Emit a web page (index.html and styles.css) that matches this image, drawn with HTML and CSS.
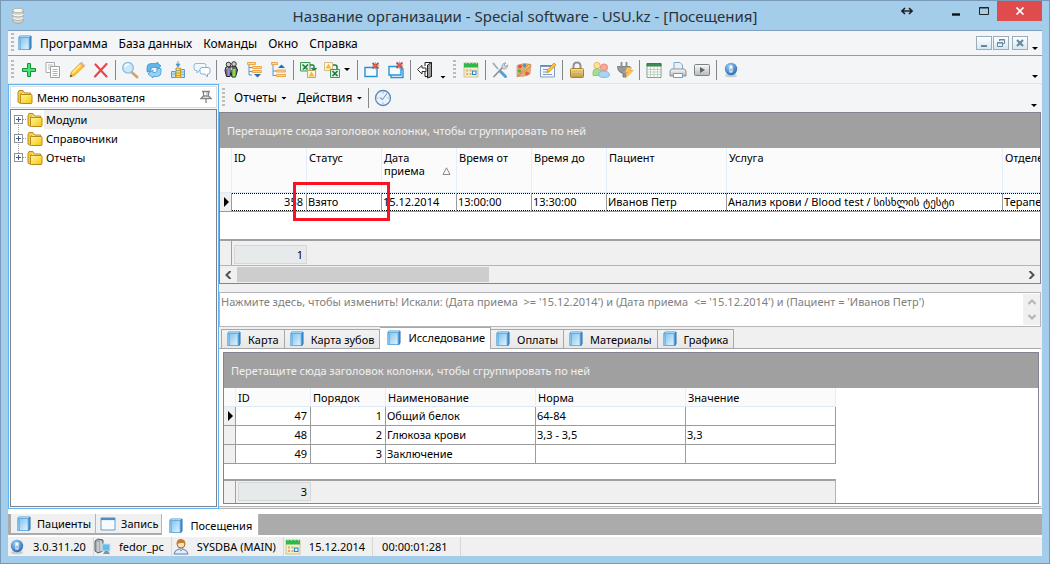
FILE: index.html
```html
<!DOCTYPE html>
<html lang="ru">
<head>
<meta charset="utf-8">
<title>Название организации - Special software - USU.kz - [Посещения]</title>
<link rel="stylesheet" href="styles.css">
</head>
<body>
<svg class="sprite" aria-hidden="true">
  <defs>
    <linearGradient id="g-blue" x1="0" y1="0" x2="1" y2="1"><stop offset="0" stop-color="#7dbfec"/><stop offset="1" stop-color="#e3f4fd"/></linearGradient>
    <linearGradient id="g-folder" x1="0" y1="0" x2="1" y2="1"><stop offset="0" stop-color="#fff6a0"/><stop offset="1" stop-color="#f7c500"/></linearGradient>
    <radialGradient id="g-info" cx=".4" cy=".3" r=".8"><stop offset="0" stop-color="#9bd0fa"/><stop offset="1" stop-color="#1c5fae"/></radialGradient>
    <linearGradient id="g-grey" x1="0" y1="0" x2="0" y2="1"><stop offset="0" stop-color="#fafafa"/><stop offset="1" stop-color="#b5b9bd"/></linearGradient>
    <linearGradient id="g-gold" x1="0" y1="0" x2="0" y2="1"><stop offset="0" stop-color="#f8e6a2"/><stop offset="1" stop-color="#c39a3c"/></linearGradient>
  </defs>
  <symbol id="book" viewBox="0 0 16 18"><path d="M1.500 3 3 1.500h11V14l-1.500 2h-11z" fill="#4f9ad6"/><path d="M14 2v12l-1.500 2" fill="none" stroke="#2a6cac"/><path d="M2 3.500h10v12H2z" fill="url(#g-blue)" stroke="#62acdf" stroke-width=".8"/><path d="M3.500 3.500v12" stroke="#74b7e6"/><path d="M3 2.500h10" stroke="#9ad2f5"/></symbol>
  <symbol id="db" viewBox="0 0 16 18"><path d="M3 3v11c0 3 10 3 10 0V3" fill="#d9d9d4" stroke="#a5a5a0"/><ellipse cx="8" cy="3.500" rx="5" ry="2.200" fill="#f7f7f4" stroke="#b2b2ad"/><path d="M3 7c0 2.500 10 2.500 10 0M3 10.500c0 2.500 10 2.500 10 0" fill="none" stroke="#fff" stroke-width="1.300"/><path d="M3 8c0 2.500 10 2.500 10 0M3 11.500c0 2.500 10 2.500 10 0" fill="none" stroke="#9b9b98" stroke-width=".7"/></symbol>
  <symbol id="add" viewBox="0 0 18 18"><path d="M7.500 2.500h3v5h5v3h-5v5h-3v-5h-5v-3h5z" fill="#4fe07a" stroke="#0a9a35"/></symbol>
  <symbol id="copy" viewBox="0 0 18 18"><path d="M2 1.500h8.500v10H2z" fill="#fff" stroke="#a5aaa8"/><path d="M4 4h5M4 6h2M4 8h2" stroke="#b9bdbb"/><path d="M6.500 5.500H15.500v11h-9z" fill="#fff" stroke="#9da3a0"/><path d="M8.500 8.500h5M8.500 10.500h5M8.500 12.500h5M8.500 14.500h5" stroke="#b0b5b2"/></symbol>
  <symbol id="pencil" viewBox="0 0 18 18"><path d="M2 16l1.500-5L12.500 2l3.500 3.500-9.500 9z" fill="#ffc62e" stroke="#d99a22" stroke-width=".8"/><path d="M4.500 12 13 3.500" stroke="#fff0a0" stroke-width="1.500"/><path d="M12 2.500 13.500 1.200 16.800 4.500 15.500 6z" fill="#f2b79e" stroke="#c88a70" stroke-width=".6"/><path d="M2 16l.8-2.500 1.700 1.700z" fill="#444"/></symbol>
  <symbol id="del" viewBox="0 0 18 18"><path d="M3.500 3.500l11 12M14.500 3 3 15.500" stroke="#e8474c" stroke-width="2.200" stroke-linecap="round"/></symbol>
  <symbol id="find" viewBox="0 0 18 18"><path d="M10.500 11l5.500 5" stroke="#d9a06b" stroke-width="2.800" stroke-linecap="round"/><circle cx="7" cy="6.800" r="5.300" fill="#c9e9fc" stroke="#8dbfe2" stroke-width="1.400"/><path d="M4 6c.5-2 2-3 4-2.500" fill="none" stroke="#fff" stroke-width="1.500"/></symbol>
  <symbol id="refresh" viewBox="0 0 18 18"><path d="M2 11V6.500q0-4 4-4h6V1L16 5l-4 4V6.500H8Q6 6.500 6 8.500V11z" fill="#62b4ec" stroke="#3a8fce" stroke-width=".7"/><path d="M16 7.500v4q0 4-4 4H8V17l-5-4 5-4v2.500h2q2 0 2-2v-2z" fill="#94d2f6" stroke="#3a8fce" stroke-width=".7"/></symbol>
  <symbol id="chart" viewBox="0 0 18 18"><path d="M2.500 10.500h4v6h-4zM11.500 8.500h4v8h-4z" fill="#bfe0f4" stroke="#5e9fcf"/><path d="M7 7h4.500v9.500H7z" fill="#ffd84a" stroke="#c99a1b"/><path d="M7 9.500h4M7 12h4M7 14.500h4M3 13h3M12 11h3M12 13.500h3" stroke="#6d9bbb" stroke-width=".7"/><path d="M9 0v4M7 3h4L9 6z" fill="#4a97d0" stroke="#4a97d0" stroke-width=".8"/></symbol>
  <symbol id="chat" viewBox="0 0 18 18"><path d="M3 2.500h8q2 0 2 2v3q0 2-2 2H6l-2 2.500v-2.500H3q-2 0-2-2v-3q0-2 2-2z" fill="#f1f8fd" stroke="#8db9da"/><path d="M9 6.500h6q2 0 2 2v2.500q0 2-2 2h-.500v3L12 13H9q-2 0-2-2V8.500q0-2 2-2z" fill="#fff" stroke="#7fb0d6"/></symbol>
  <symbol id="people" viewBox="0 0 18 18"><path d="M4 6 3 9.500 4.500 15.500h3.500l1-4 1 4.500h3.500L15.500 9 14 5.500z" fill="#6b6b6b" stroke="#222"/><circle cx="6.500" cy="3.500" r="2.300" fill="#cfcfcf" stroke="#333"/><circle cx="12" cy="3" r="2.300" fill="#cfcfcf" stroke="#333"/><path d="M6.500 7.500v7.500" stroke="#9a86ee" stroke-width="2.400"/><path d="M12 8v7.500" stroke="#7ee33c" stroke-width="3"/><path d="M4.500 8l1-1.500M9 9l.5-2.500" stroke="#eee"/></symbol>
  <symbol id="treedown" viewBox="0 0 18 18"><path d="M3 4v10M3 6.500h3M3 10.500h3M3 14h3" fill="none" stroke="#5a9bd0"/><path d="M1.500 1.500h8v2h-8zM6.500 5.500h9v2h-9zM6.500 9.500h9v2h-9z" fill="#ffd79a" stroke="#e8a040" stroke-width=".9"/><path d="M8 13h7l-3.500 3.500z" fill="#1c6fb8"/></symbol>
  <symbol id="treeup" viewBox="0 0 18 18"><path d="M3 4v11M3 10h3M3 14.500h3" fill="none" stroke="#5a9bd0"/><path d="M1.500 1.500h6v2h-6zM6.500 9h9v2h-9zM6.500 13.500h9v2h-9z" fill="#ffd79a" stroke="#e8a040" stroke-width=".9"/><path d="M8 7h7l-3.500-3.500z" fill="#1c6fb8"/></symbol>
  <symbol id="xlsout" viewBox="0 0 18 18"><path d="M1.500 1.500h9.500v8.500H1.500z" fill="#dff0e0" stroke="#3f9a55"/><path d="M3.500 3.500l5 5M9 3.500l-5 5" stroke="#17803a" stroke-width="1.600"/><path d="M11 4h3q1 0 1 2v2M12.500 7l2.500 2.500L17.500 7" fill="none" stroke="#17803a" stroke-width="1.500"/><path d="M8.500 9.500h8v7h-8z" fill="#fff6dc" stroke="#c3a66b"/><path d="M12.500 10.500l3 5h-6z" fill="#f5b93f"/></symbol>
  <symbol id="xlsin" viewBox="0 0 18 18"><path d="M1.500 1.500h8v8h-8z" fill="#fff6dc" stroke="#d2bd8b"/><path d="M5.500 2.500l3 5h-6z" fill="#f5b93f"/><path d="M10 4h2q2 0 2 2v2" fill="none" stroke="#17803a" stroke-width="1.500"/><path d="M7.500 8.500h9v8h-9z" fill="#dff0e0" stroke="#3f9a55"/><path d="M9.500 10l5 5M14.500 10l-5 5" stroke="#17803a" stroke-width="1.600"/></symbol>
  <symbol id="winx" viewBox="0 0 18 18"><path d="M2 6.500h12v9H2z" fill="#f7fbfe" stroke="#2a93d8" stroke-width="1.400"/><path d="M9.500 2l6 5.500M15.500 2l-6 5.500" stroke="#cc4a36" stroke-width="1.800"/><path d="M12.500 1v7.500M9 4.700h7.500" stroke="#d9715f" stroke-width=".7"/></symbol>
  <symbol id="winsx" viewBox="0 0 18 18"><path d="M4 8h12v8.500H4z" fill="#fff" stroke="#2a93d8" stroke-width="1.400"/><path d="M2 5.500h12v8.500H2z" fill="#f7fbfe" stroke="#2a93d8" stroke-width="1.400"/><path d="M9.500 1.500l6 5.500M15.500 1.500l-6 5.500" stroke="#cc4a36" stroke-width="1.800"/><path d="M12.500.5V8M9 4.200h7.500" stroke="#d9715f" stroke-width=".7"/></symbol>
  <symbol id="exit" viewBox="0 0 18 18"><path d="M9 5V1.500h6.500v14H9V11" fill="#fff" stroke="#222"/><path d="M11.500 4l4-2.500v14l-4 1.500z" fill="#9a9a9a" stroke="#222"/><path d="M1.500 8.500 6 4.500v2.500h4v3.500H6v2.500z" fill="#fff" stroke="#333"/></symbol>
  <symbol id="cal" viewBox="0 0 18 18"><rect x="2" y="2" width="14" height="14" fill="#f5ecc8" stroke="#c5b88b" stroke-width=".8"/><path d="M2 2h14v4.500H2z" fill="#31b84a"/><path d="M4 1v2M7.500 1v2M11 1v2M14.500 1v2" stroke="#b7e4be"/><path d="M4 9.500h2M7.500 9.500h2M4 13h2M7.500 13h2" stroke="#dcae7c" stroke-width="1.800"/><rect x="10.500" y="10" width="3.500" height="3.500" fill="#e8f6fd" stroke="#2386ca"/></symbol>
  <symbol id="tools" viewBox="0 0 18 18"><path d="M2 2l5 6" stroke="#9da7ae" stroke-width="1.600"/><path d="M9 10l5.500 5.500" stroke="#56a0d6" stroke-width="3" stroke-linecap="round"/><path d="M3 15.500 12 6" stroke="#8b969d" stroke-width="1.800" stroke-linecap="round"/><path d="M11.500 7.500C10 4.500 12 1.500 15 2l-2 2 1 1.500 2.500-1.500c.5 3-2.500 5-5 3.500z" fill="#d5dadd" stroke="#8b969d" stroke-width=".8"/></symbol>
  <symbol id="palette" viewBox="0 0 18 18"><path d="M2 4.500q7-3.500 14-1L15 13q-5 3-13 2.500z" fill="#e3ae7c" stroke="#cf9662" stroke-width=".7"/><circle cx="5" cy="5.500" r="1.900" fill="#ea5146"/><circle cx="9.500" cy="4.500" r="1.700" fill="#4c8ed6"/><circle cx="4.500" cy="10" r="1.700" fill="#5aad4f"/><circle cx="12" cy="12.500" r="2" fill="#eb5c45"/><path d="M2 16 14 3l2 2z" fill="#edc74b" stroke="#b8773a" stroke-width=".6"/></symbol>
  <symbol id="note" viewBox="0 0 18 18"><path d="M1.500 4.500h14v11.500h-14z" fill="#f4f8fd" stroke="#7f9fc8"/><path d="M1.500 5h14" stroke="#5584bd" stroke-width="1.600"/><path d="M4 8.500h5M4 11h6M4 13.500h9" stroke="#7e9bc0"/><path d="M7.500 11.500 9 8.500l6-6.500 2 1.800-6 6.500z" fill="#ffc42f" stroke="#b98c35" stroke-width=".7"/></symbol>
  <symbol id="lock" viewBox="0 0 18 18"><path d="M5.500 8V5q0-3.500 3.500-3.500T12.500 5v3" fill="none" stroke="#8e9398" stroke-width="2"/><rect x="2.500" y="7.500" width="13" height="9" rx="1" fill="url(#g-gold)" stroke="#a8812c"/><path d="M4 10h10M4 12.500h10M4 14.500h10" stroke="#c9a552" stroke-width=".7"/></symbol>
  <symbol id="users" viewBox="0 0 18 18"><circle cx="5" cy="4.500" r="3.200" fill="#ffe09a" stroke="#ecae57" stroke-width=".8"/><path d="M1 11q0-3.500 4-3.500t4 3.500v3.500H1z" fill="#a5dd8c" stroke="#7cc164" stroke-width=".7"/><circle cx="12" cy="6.500" r="3.600" fill="#fba79a" stroke="#e8786a" stroke-width=".8"/><path d="M6.500 14.500q0-4.500 5.500-4.500t5.500 4.500q-1 2-5.500 2t-5.500-2z" fill="#a5d6f5" stroke="#6fb0de" stroke-width=".8"/></symbol>
  <symbol id="plug" viewBox="0 0 18 18"><path d="M5.500 1v4M10.500 1v4" stroke="#8b8e90" stroke-width="1.800"/><path d="M1.500 5.500h12.500v2q-1 4-4.500 5V16H7v-3.500Q3 11.500 2 8.500z" fill="#96999c" stroke="#707376" stroke-width=".8"/><path d="M11 6.500h4.500L14 9.500h3L9.500 17l2-5.500H9z" fill="#ffc75a" stroke="#eba23c" stroke-width=".8"/></symbol>
  <symbol id="table" viewBox="0 0 18 18"><path d="M2 2.500h14v14H2z" fill="#fff" stroke="#84a086"/><path d="M2 2.500h14v2.500H2z" fill="#3c9250" stroke="#3b7a49"/><path d="M2 8.500h14M2 11h14M2 13.500h14M5.500 6v10.500M9 6v10.500M12.500 6v10.500" stroke="#b3cab4" stroke-width=".8"/></symbol>
  <symbol id="print" viewBox="0 0 18 18"><path d="M5 8V1.500h6l2.500 2.500v4" fill="#e5f2fb" stroke="#85a9c6"/><path d="M2.500 8h13l1.500 2v5H1v-5z" fill="url(#g-grey)" stroke="#8c9196"/><path d="M4.500 12.500h9v4h-9z" fill="#fff" stroke="#6b9cc4"/></symbol>
  <symbol id="play" viewBox="0 0 18 18"><rect x="1.500" y="3.500" width="15" height="11" rx="1" fill="url(#g-grey)" stroke="#7d8487"/><path d="M7 6v6l5-3z" fill="#5c6468"/></symbol>
  <symbol id="info" viewBox="0 0 18 18"><ellipse cx="9" cy="14.500" rx="6" ry="1.800" fill="#c4ccd2"/><circle cx="9" cy="8" r="6.200" fill="url(#g-info)"/><path d="M7.500 4.500h3v7h-3z" fill="#fff"/><path d="M9 7.500v3" stroke="#4a85c4"/></symbol>
  <symbol id="clock" viewBox="0 0 18 18"><circle cx="9" cy="9" r="7.500" fill="#e9f2fb" stroke="#5a86b8" stroke-width="1.300"/><path d="M9 3v1.500M9 13.500V15M3 9h1.500M13.500 9H15" stroke="#8eacce"/><path d="M6 8.500 8.500 10.500 13 4.500" fill="none" stroke="#7a9ec9" stroke-width="1.100"/></symbol>
  <symbol id="folder" viewBox="0 0 16 16"><path d="M1 3.500V13l2.500 1.500V5L7 3.500 6 1.500H2z" fill="#f4d03c" stroke="#b98a1c"/><path d="M3.500 5.500h10V4H7.500L6.500 2.500" fill="#fbe480" stroke="#b98a1c"/><rect x="3.500" y="5.500" width="11.500" height="9" rx="1" fill="url(#g-folder)" stroke="#b98a1c"/></symbol>
  <symbol id="pin" viewBox="0 0 12 14"><path d="M2 1.500h8M3.500 2v4M8.500 2v4M1 8.500h10L8.500 6h-5zM6 8.500V13" fill="none" stroke="#858585" stroke-width="1.300"/><path d="M7 2v5" stroke="#aaa"/></symbol>
  <symbol id="win" viewBox="0 0 18 18"><path d="M2 3h14v12H2z" fill="#f7fbff" stroke="#6a9ac6"/><path d="M2 4h14" stroke="#4f8cc4" stroke-width="2.200"/></symbol>
  <symbol id="pc" viewBox="0 0 18 18"><path d="M1 3l3-2 5 1v11l-5 2-3-2z" fill="#a9adb0" stroke="#5b6064"/><path d="M4 4v10M7 3v10" stroke="#e5e8ea"/><path d="M8 6h8v7H8z" fill="#5bbdf0" stroke="#d4dade" stroke-width="1.200"/><path d="M9 16h7l-2-3h-3z" fill="#8a8f93"/></symbol>
  <symbol id="user" viewBox="0 0 18 18"><path d="M2 16q.5-4 5-5h4q4.500 1 5 5z" fill="#e3edfa" stroke="#5b7fae"/><circle cx="9" cy="6" r="4" fill="#ffe0b4" stroke="#a76a2b"/><path d="M4.800 6C4 2 8 0 10.500 1.500 13.500 2 13.500 5 13 6.500 12 4 8 5 4.800 6z" fill="#c57f33"/><path d="M7.500 11 9 13l1.500-2" fill="#fff" stroke="#5b7fae" stroke-width=".8"/></symbol>
</svg>

<div class="window">
  <header class="titlebar">
    <svg class="title-icon"><use href="#db"/></svg>
    <h1 class="title">Название организации - Special software - USU.kz - [Посещения]</h1>
    <div class="title-controls">
      <button class="cap cap-move" aria-label="Переместить"><svg width="12" height="8" viewBox="0 0 12 8"><path d="M2 4h8M4 1 1 4l3 3M8 1l3 3-3 3" fill="none" stroke="#222" stroke-width="1.600"/></svg></button>
      <button class="cap cap-min" aria-label="Свернуть"><svg width="10" height="10" viewBox="0 0 10 10"><path d="M1 8.500h8" stroke="#111" stroke-width="2.400"/></svg></button>
      <button class="cap cap-max" aria-label="Развернуть"><svg width="10" height="8" viewBox="0 0 10 8"><path d="M.5.5h9v7h-9z" fill="none" stroke="#222"/><path d="M0 1h10" stroke="#222"/></svg></button>
      <button class="cap cap-close" aria-label="Закрыть"><svg width="10" height="8" viewBox="0 0 10 8"><path d="M1.500.5l7 7M8.500.5l-7 7" stroke="#fff" stroke-width="1.700"/></svg></button>
    </div>
  </header>

  <div class="client">
    <nav class="menubar">
      <span class="grip"></span>
      <svg class="menu-icon"><use href="#book"/></svg>
      <button class="menu-item">Программа</button>
      <button class="menu-item">База данных</button>
      <button class="menu-item">Команды</button>
      <button class="menu-item">Окно</button>
      <button class="menu-item">Справка</button>
      <div class="mdi-controls">
        <button class="mdi" aria-label="Свернуть окно"><svg width="10" height="10" viewBox="0 0 10 10"><path d="M2 8h6" stroke="#6b8799" stroke-width="2"/></svg></button>
        <button class="mdi" aria-label="Восстановить окно"><svg width="10" height="10" viewBox="0 0 10 10"><path d="M3.500 3V1.500h5v4H7M3 2h6M1.500 4.500h5v4h-5zM1 5h6" fill="none" stroke="#6b8799"/></svg></button>
        <button class="mdi mdi-last" aria-label="Закрыть окно"><svg width="10" height="10" viewBox="0 0 10 10"><path d="M2 2l6 6M8 2 2 8" stroke="#6b8799" stroke-width="2.200"/></svg></button>
      </div>
      <button class="more" aria-label="Настройка меню"><i class="caret"></i></button>
    </nav>

    <div class="toolbar">
      <span class="grip"></span>
      <button class="tool" aria-label="Добавить"><svg><use href="#add"/></svg></button>
      <button class="tool" aria-label="Копировать"><svg><use href="#copy"/></svg></button>
      <button class="tool" aria-label="Изменить"><svg><use href="#pencil"/></svg></button>
      <button class="tool" aria-label="Удалить"><svg><use href="#del"/></svg></button>
      <span class="sep"></span>
      <button class="tool" aria-label="Найти"><svg><use href="#find"/></svg></button>
      <button class="tool" aria-label="Обновить"><svg><use href="#refresh"/></svg></button>
      <button class="tool" aria-label="Ширина колонок"><svg><use href="#chart"/></svg></button>
      <button class="tool" aria-label="Сообщения"><svg><use href="#chat"/></svg></button>
      <span class="sep"></span>
      <button class="tool" aria-label="Аудит"><svg><use href="#people"/></svg></button>
      <button class="tool" aria-label="Развернуть группы"><svg><use href="#treedown"/></svg></button>
      <button class="tool" aria-label="Свернуть группы"><svg><use href="#treeup"/></svg></button>
      <span class="sep"></span>
      <button class="tool" aria-label="Экспорт"><svg><use href="#xlsout"/></svg></button>
      <button class="tool" aria-label="Импорт"><svg><use href="#xlsin"/></svg></button>
      <button class="drop" aria-label="Варианты импорта"><i class="caret"></i></button>
      <span class="sep"></span>
      <button class="tool" aria-label="Закрыть окно"><svg><use href="#winx"/></svg></button>
      <button class="tool" aria-label="Закрыть все окна"><svg><use href="#winsx"/></svg></button>
      <span class="sep"></span>
      <button class="tool" aria-label="Выход"><svg><use href="#exit"/></svg></button>
      <button class="drop drop-low" aria-label="Настройка панели"><i class="caret"></i></button>
      <span class="grip"></span>
      <button class="tool" aria-label="Календарь"><svg><use href="#cal"/></svg></button>
      <span class="sep"></span>
      <button class="tool" aria-label="Настройки"><svg><use href="#tools"/></svg></button>
      <button class="tool" aria-label="Оформление"><svg><use href="#palette"/></svg></button>
      <button class="tool" aria-label="Заметки"><svg><use href="#note"/></svg></button>
      <span class="sep"></span>
      <button class="tool" aria-label="Блокировка"><svg><use href="#lock"/></svg></button>
      <button class="tool" aria-label="Пользователи"><svg><use href="#users"/></svg></button>
      <button class="tool" aria-label="Подключение"><svg><use href="#plug"/></svg></button>
      <span class="sep"></span>
      <button class="tool" aria-label="Таблица"><svg><use href="#table"/></svg></button>
      <button class="tool" aria-label="Печать"><svg><use href="#print"/></svg></button>
      <button class="tool" aria-label="Видео"><svg><use href="#play"/></svg></button>
      <span class="sep"></span>
      <button class="tool" aria-label="О программе"><svg><use href="#info"/></svg></button>
      <button class="more" aria-label="Ещё"><i class="caret"></i></button>
    </div>

    <div class="workspace">
      <aside class="dock">
        <div class="dock-head">
          <svg class="folder"><use href="#folder"/></svg>
          <span class="dock-title">Меню пользователя</span>
          <button class="pin" aria-label="Закрепить"><svg width="12" height="14"><use href="#pin"/></svg></button>
        </div>
        <ul class="tree">
          <li class="node"><button class="expander" aria-label="Развернуть"></button><svg class="folder"><use href="#folder"/></svg><span class="node-text node-active">Модули</span></li>
          <li class="node"><button class="expander" aria-label="Развернуть"></button><svg class="folder"><use href="#folder"/></svg><span class="node-text">Справочники</span></li>
          <li class="node"><button class="expander" aria-label="Развернуть"></button><svg class="folder"><use href="#folder"/></svg><span class="node-text">Отчеты</span></li>
        </ul>
      </aside>

      <main class="content">
        <div class="subbar">
          <span class="grip"></span>
          <button class="sub-item">Отчеты <i class="caret"></i></button>
          <button class="sub-item">Действия <i class="caret"></i></button>
          <span class="sep"></span>
          <button class="tool" aria-label="Время"><svg><use href="#clock"/></svg></button>
          <button class="more" aria-label="Ещё"><i class="caret"></i></button>
        </div>

        <section class="grid visits">
          <div class="group-panel">Перетащите сюда заголовок колонки, чтобы сгруппировать по ней</div>
          <div class="clip">
            <table class="data data-visits">
              <colgroup><col class="c-mark"><col class="c-75"><col class="c-75"><col class="c-75"><col class="c-75"><col class="c-75"><col class="c-120"><col class="c-276"><col class="c-75"></colgroup>
              <thead><tr><th></th><th>ID</th><th>Статус</th><th><span class="sorted">Дата приема<svg width="9" height="8" viewBox="0 0 9 8"><path d="M4.500.8 8 7.500H1z" fill="none" stroke="#8a8a8a"/></svg></span></th><th>Время от</th><th>Время до</th><th>Пациент</th><th>Услуга</th><th>Отделение</th></tr></thead>
              <tbody><tr><td class="mark"><i class="arrow"></i></td><td class="num">358</td><td class="flagged">Взято<span class="highlight"></span></td><td>15.12.2014</td><td>13:00:00</td><td>13:30:00</td><td>Иванов Петр</td><td>Анализ крови / Blood test / <span class="geo" lang="ka">სისხლის ტესტი</span></td><td>Терапевт</td></tr></tbody>
            </table>
          </div>
          <div class="summary"><span class="summary-mark"></span><output class="summary-cell">1</output></div>
          <div class="hscroll">
            <button class="scroll-btn" aria-label="Влево"><svg width="7" height="8" viewBox="0 0 7 8"><path d="M5.500 0 1.500 4l4 4" fill="none" stroke="#505050" stroke-width="2"/></svg></button>
            <span class="track"><span class="thumb"></span></span>
            <button class="scroll-btn" aria-label="Вправо"><svg width="7" height="8" viewBox="0 0 7 8"><path d="M1.500 0l4 4-4 4" fill="none" stroke="#505050" stroke-width="2"/></svg></button>
          </div>
        </section>

        <div class="filter">
          <textarea class="filter-text" aria-label="Условия поиска" readonly>Нажмите здесь, чтобы изменить! Искали: (Дата приема  &gt;= '15.12.2014') и (Дата приема  &lt;= '15.12.2014') и (Пациент = 'Иванов Петр')</textarea>
          <div class="vscroll">
            <button class="vbtn" aria-label="Вверх"><svg width="8" height="6" viewBox="0 0 8 6"><path d="M.5 5 4 1.500 7.500 5" fill="none" stroke="#b4b4b4" stroke-width="2"/></svg></button>
            <button class="vbtn" aria-label="Вниз"><svg width="8" height="6" viewBox="0 0 8 6"><path d="M.5 1 4 4.500 7.500 1" fill="none" stroke="#b4b4b4" stroke-width="2"/></svg></button>
          </div>
        </div>

        <div class="tabs" role="tablist">
          <button class="tab" role="tab"><svg class="book"><use href="#book"/></svg>Карта</button>
          <button class="tab" role="tab"><svg class="book"><use href="#book"/></svg>Карта зубов</button>
          <button class="tab tab-on" role="tab" aria-selected="true"><svg class="book"><use href="#book"/></svg>Исследование</button>
          <button class="tab" role="tab"><svg class="book"><use href="#book"/></svg>Оплаты</button>
          <button class="tab" role="tab"><svg class="book"><use href="#book"/></svg>Материалы</button>
          <button class="tab" role="tab"><svg class="book"><use href="#book"/></svg>Графика</button>
        </div>
        <div class="page">
          <section class="grid research">
            <div class="group-panel">Перетащите сюда заголовок колонки, чтобы сгруппировать по ней</div>
            <div class="clip">
              <table class="data data-research">
                <colgroup><col class="c-mark"><col class="c-75"><col class="c-75"><col class="c-150"><col class="c-150"><col class="c-150"></colgroup>
                <thead><tr><th></th><th>ID</th><th>Порядок</th><th>Наименование</th><th>Норма</th><th>Значение</th></tr></thead>
                <tbody>
                  <tr><td class="mark"><i class="arrow"></i></td><td class="num">47</td><td class="num">1</td><td>Общий белок</td><td>64-84</td><td></td></tr>
                  <tr><td class="mark"></td><td class="num">48</td><td class="num">2</td><td>Глюкоза крови</td><td>3,3 - 3,5</td><td>3,3</td></tr>
                  <tr><td class="mark"></td><td class="num">49</td><td class="num">3</td><td>Заключение</td><td></td><td></td></tr>
                </tbody>
              </table>
            </div>
            <div class="summary summary-short"><span class="summary-mark"></span><output class="summary-cell">3</output></div>
          </section>
        </div>
      </main>
    </div>

    <div class="mditabs" role="tablist">
      <button class="mtab" role="tab"><svg class="book"><use href="#book"/></svg>Пациенты</button>
      <button class="mtab mtab-tight" role="tab"><svg class="wicon"><use href="#win"/></svg>Запись</button>
      <button class="mtab mtab-on" role="tab" aria-selected="true"><svg class="book"><use href="#book"/></svg>Посещения</button>
    </div>

    <footer class="status">
      <span class="cell"><svg><use href="#info"/></svg>3.0.311.20</span>
      <span class="cell"><svg><use href="#pc"/></svg>fedor_pc</span>
      <span class="cell"><svg><use href="#user"/></svg>SYSDBA (MAIN)</span>
      <span class="cell"><svg><use href="#cal"/></svg>15.12.2014</span>
      <span class="cell cell-time">00:00:01:281</span>
    </footer>
  </div>
</div>
</body>
</html>
```
FILE: styles.css
```css
* { box-sizing: border-box; }
body { margin: 0; font: 11px/13px "Noto Sans", "Open Sans", sans-serif; color: #000; }
button { font: inherit; color: inherit; background: none; border: 0; padding: 0; margin: 0; }
svg { display: block; flex: none; }
.sprite { position: absolute; width: 0; height: 0; }

.window { min-height: 100vh; display: flex; flex-direction: column; background: #a4cceb; border: 1px solid #7899b8; padding: 0 7px 7px; }
.titlebar { height: 29px; display: grid; grid-template-columns: 1fr auto 1fr; align-items: center; }
.title-icon { width: 16px; height: 18px; margin-left: 2px; }
.title { margin: 0; font-size: 15px; line-height: 20px; font-weight: 400; color: #2b3238; }
.title-controls { justify-self: end; align-self: start; display: flex; }
.cap { height: 20px; display: flex; align-items: center; justify-content: center; }
.cap-move { width: 28px; margin-right: 21px; }
.cap-min { width: 28px; }
.cap-max { width: 27px; }
.cap-close { width: 45px; background: #e04b4b; }

.client { flex: 1; display: flex; flex-direction: column; background: #f4f5f7; border-top: 1px solid #7f9fbd; min-width: 0; }
.caret { display: block; width: 6px; height: 3px; background: #000; clip-path: polygon(0 0, 100% 0, 50% 100%); }
.grip { width: 3px; height: 20px; margin: 0 3px; background: repeating-linear-gradient(#b9bcc0 0 2px, transparent 2px 4px); }
.more { width: 14px; align-self: flex-end; margin-left: auto; display: flex; justify-content: center; padding-bottom: 5px; }

.menubar { height: 25px; display: flex; align-items: center; border-bottom: 1px solid #98999c; font-size: 12px; line-height: 16px; }
.menu-icon { width: 16px; height: 18px; margin-right: 1px; }
.menu-item { padding: 1px 5px 0 6px; }
.mdi-controls { margin-left: auto; display: flex; gap: 1px; }
.mdi { width: 16px; height: 14px; display: flex; align-items: center; justify-content: center; border: 1px solid #9aadba; background: linear-gradient(#fff, #d2e8f8); }
.mdi-last { margin-left: 2px; }
.mdi-controls + .more { margin-left: 0; }

.toolbar { height: 28px; display: flex; align-items: center; border-bottom: 1px solid #e2e3e6; }
.tool { width: 24px; height: 24px; display: flex; align-items: center; justify-content: center; }
.tool svg { width: 18px; height: 18px; }
.sep { width: 1px; height: 20px; margin: 0 2px; background: #84868a; }
.drop { width: 11px; height: 24px; display: flex; align-items: center; }
.drop-low { width: 13px; align-items: flex-end; padding: 0 0 3px 3px; }

.workspace { flex: 1; display: flex; min-height: 0; background: #f0f0f2; }
.dock { width: 211px; flex: none; border: 1px solid #62b4f0; background: #f7f8fa; padding: 1px; display: flex; flex-direction: column; gap: 1px; }
.dock-head { height: 22px; display: flex; align-items: center; gap: 4px; padding: 0 4px 0 6px; background: #fff; border: 1px solid #dcdcdc; }
.folder { width: 16px; height: 16px; }
.pin { margin-left: auto; }
.tree { flex: 1; margin: 0; padding: 0 0 0 3px; list-style: none; background: #fff; border: 1px solid #7d818c; }
.node { height: 19px; display: flex; align-items: center; }
.expander { position: relative; width: 9px; height: 9px; margin-right: 4px; border: 1px solid #919191; background: linear-gradient(#3f5c8c, #3f5c8c) center / 5px 1px no-repeat, linear-gradient(#3f5c8c, #3f5c8c) center / 1px 5px no-repeat, #fff; }
.expander::after { content: ""; position: absolute; left: 8px; top: 3px; width: 3px; border-top: 1px dotted #999; }
.node:not(:last-child) .expander::before { content: ""; position: absolute; left: 3px; top: 9px; height: 9px; border-left: 1px dotted #999; }
.node-text { flex: 1; margin-left: 1px; padding-left: 2px; line-height: 19px; }
.node-active { background: #efefef; }

.content { flex: 1; min-width: 0; display: flex; flex-direction: column; padding: 0 1px 1px 0; border-bottom: 1px solid #b4b4b4; }
.subbar { height: 28px; display: flex; align-items: center; font-size: 12px; line-height: 16px; background: #f4f5f7; }
.sub-item { display: flex; align-items: center; gap: 4px; padding: 0 4px 0 6px; }

.grid { background: #fff; border: 1px solid #82858f; display: flex; flex-direction: column; }
.group-panel { height: 35px; padding: 0 7px; line-height: 35px; background: #a0a0a0; color: #f0f0f0; white-space: nowrap; overflow: hidden; }
.clip { overflow: hidden; }
.data { table-layout: fixed; border-collapse: separate; border-spacing: 0; }
.data-visits { width: 858px; }
.data-research { width: 612px; }
.c-mark { width: 12px; }
.c-75 { width: 75px; }
.c-120 { width: 120px; }
.c-150 { width: 150px; }
.c-276 { width: 276px; }
.data th { padding: 3px 2px 0; background: #fbfbfb; border-right: 1px solid #e3eef8; border-bottom: 1px solid #dcebf7; font-weight: 400; text-align: left; vertical-align: top; overflow: hidden; white-space: nowrap; }
.data td { height: 19px; padding: 0 1px 1px; border-right: 1px solid #9b9b9b; border-bottom: 1px solid #9b9b9b; overflow: hidden; white-space: nowrap; }
.data .num { text-align: right; padding-right: 3px; }
.data .mark { background: #f0f0f0; padding: 0 0 0 4px; }
.arrow { display: block; width: 5px; height: 10px; background: #000; clip-path: polygon(0 0, 100% 50%, 0 100%); }
.data-visits th { height: 45px; }
.data-visits td:not(.mark) { background: repeating-linear-gradient(90deg, #000 0 1px, transparent 1px 2px) top / 100% 1px no-repeat, repeating-linear-gradient(90deg, #000 0 1px, transparent 1px 2px) bottom / 100% 1px no-repeat; }
.sorted { display: flex; align-items: flex-end; justify-content: space-between; padding-right: 3px; white-space: normal; }
.sorted svg { margin-bottom: 2px; }
.data .flagged { position: relative; overflow: visible; }
.highlight { position: absolute; z-index: 1; left: -14px; right: -9px; top: -11px; bottom: -10px; border: 3px solid #fb1222; }
.geo { font-family: "DejaVu Sans", sans-serif; }
.summary { height: 27px; display: flex; margin-top: auto; background: #f0f0f0; border-top: 2px solid #a0a0a0; border-bottom: 1px solid #b4b4b4; }
.summary-mark { width: 12px; border-right: 1px solid #a0a0a0; }
.summary-cell { width: 73px; height: 19px; margin: 4px 0 0 2px; padding-right: 3px; text-align: right; line-height: 18px; background: #e6eaea; border: 1px solid #d3d7d7; }
.visits { height: 172px; }
.visits .clip { flex: 1; }
.hscroll { height: 17px; display: flex; background: #f0f0f0; }
.scroll-btn { width: 17px; display: flex; align-items: center; justify-content: center; }
.track { flex: 1; padding: 1px 0; display: flex; }
.thumb { width: 32%; background: #cdcdcd; }

.filter { height: 35px; margin: 8px 0 1px; display: flex; background: #fff; border: 1px solid #b4b6ba; }
.filter-text { flex: 1; min-width: 0; padding: 2px 1px; border: 0; resize: none; overflow: hidden; outline: 0; background: #fff; color: #808080; font: inherit; }
.vscroll { width: 17px; display: flex; flex-direction: column; background: #f0f0f0; margin: 1px 0; }
.vbtn { flex: 1; display: flex; align-items: center; justify-content: center; }

.tabs { height: 21px; display: flex; align-items: flex-end; padding-left: 2px; background: linear-gradient(#a8a8ac, #a8a8ac) bottom / 100% 1px no-repeat, #f0f0f0; }
.tab { height: 20px; display: flex; align-items: center; gap: 6px; padding: 0 5px 0 4px; border: 1px solid #a8a8ac; background: linear-gradient(#f2f2f2, #e8e8e8); white-space: nowrap; }
.tab + .tab { border-left: 0; }
.book { width: 16px; height: 18px; }
.tab-on { height: 22px; padding: 0 5px 2px 6px; background: #fff; border-bottom: 0; }
.page { flex: 1; display: flex; padding: 3px 2px 2px 4px; background: #fff; border-bottom: 1px solid #b4b4b4; }
.research { flex: 1; min-width: 0; }
.data-research th { height: 19px; }
.data-research td { height: 19px; }
.summary-short { width: 612px; height: 24px; border-bottom: 0; border-right: 1px solid #b4b4b4; }
.summary-short .summary-cell { margin-top: 1px; }

.mditabs { height: 28px; padding: 5px 0 2px 3px; display: flex; align-items: flex-start; background: linear-gradient(#fff 0 5px, #ababab 5px 26px, #fff 26px); }
.mtab { height: 19px; display: flex; align-items: center; gap: 5px; padding: 0 4px 0 5px; background: #f0f0f0; border-right: 1px solid #b5b5b5; }
.mtab-tight { gap: 4px; padding: 0 3px; }
.wicon { width: 18px; height: 18px; }
.mtab-on { height: 21px; gap: 6px; padding: 2px 6px 0 6px; background: #fff; }
.status { height: 19px; display: flex; background: #f0f0f0; }
.cell { display: flex; align-items: center; gap: 7px; padding: 0 7px 0 0; border-right: 1px solid #d7d7d7; }
.cell svg { width: 18px; height: 18px; }
.cell-time { padding: 0 12px 0 9px; }
```
